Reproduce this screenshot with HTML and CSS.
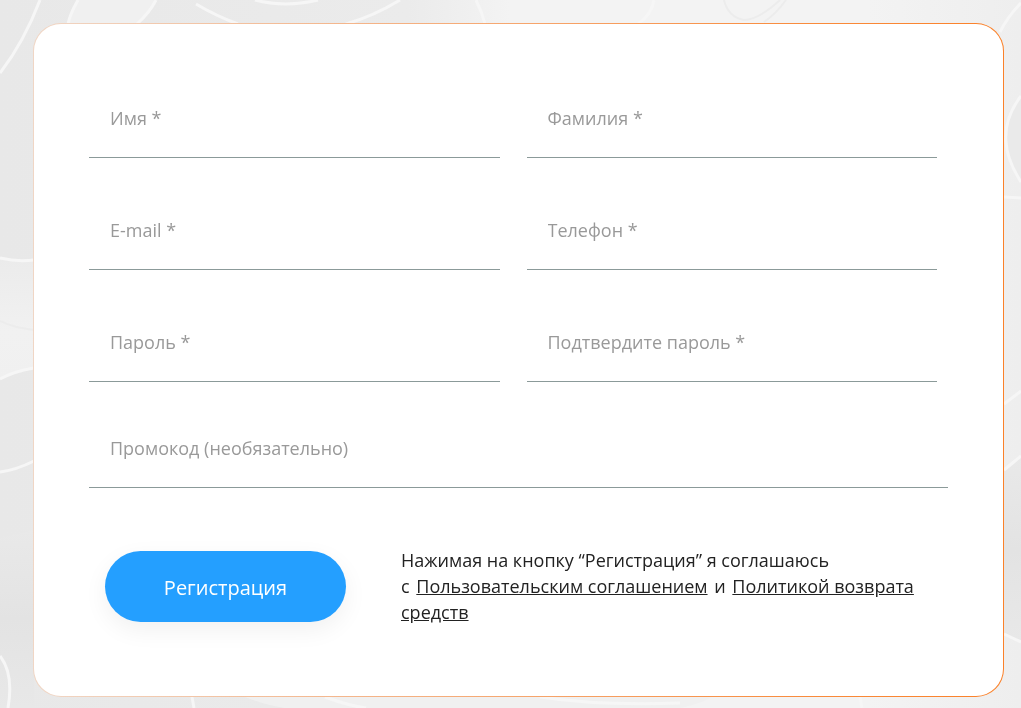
FILE: index.html
```html
<!DOCTYPE html>
<html lang="ru">
<head>
  <meta charset="UTF-8" />
  <title>Регистрация</title>
  <meta name="viewport" content="width=device-width, initial-scale=1.0" />
  <link rel="stylesheet" href="styles.css">
</head>
<body>

<svg class="page-bg" viewBox="0 0 1021 708" preserveAspectRatio="none" aria-hidden="true">
  <defs>
    <linearGradient id="base" x1="0" y1="0" x2="1" y2="0">
      <stop offset="0" stop-color="#e8e8e8" />
      <stop offset="0.4" stop-color="#ebebeb" />
      <stop offset="0.5" stop-color="#f3f3f3" />
      <stop offset="0.85" stop-color="#f3f3f3" />
      <stop offset="1" stop-color="#eeeeee" />
    </linearGradient>
    <linearGradient id="side" x1="0" y1="0" x2="0" y2="1">
      <stop offset="0" stop-color="#ebebeb" />
      <stop offset="0.6" stop-color="#f1f1f1" />
      <stop offset="1" stop-color="#f0f0f0" />
    </linearGradient>
    <linearGradient id="shade" x1="0" y1="0" x2="0" y2="1">
      <stop offset="0" stop-color="#e9e9e9" />
      <stop offset="0.5" stop-color="#e3e3e3" />
      <stop offset="1" stop-color="#e8e8e8" />
    </linearGradient>
  </defs>
  <rect width="1021" height="708" fill="url(#base)" />
  <path d="M78 0 Q70 14 68 24 H136 Q148 12 156 0Z" fill="#f0f0f0" />
  <path d="M0 258 Q17 262 34 260 V368 Q15 372 0 380Z" fill="url(#side)" />
  <path d="M0 538 L34 530 V708 H0Z" fill="url(#shade)" />
  <path d="M1004 470 L1021 456 V642 L1004 634Z" fill="url(#shade)" />
  <path d="M1021 96 Q1004 118 1006 142 Q1007 160 1021 182Z" fill="#eaeaea" />
  <path d="M245 697 Q268 706 285 708 H680 Q700 704 712 697Z" fill="#f0f0f0" />
  <g class="bg-lines">
    <path d="M40 0 Q24 42 0 73" />
    <path d="M78 0 Q70 14 68 24" />
    <path d="M156 0 Q150 12 137 24" />
    <path d="M196 4 Q216 16 238 24" />
    <path d="M255 0 Q285 8 318 0" />
    <path d="M400 0 Q374 16 346 24" />
    <path d="M476 0 Q482 12 485 24" />
    <path d="M654 0 Q652 14 638 24" />
    <path d="M1021 3 Q1008 16 1000 32" />
    <path d="M1021 96 Q1004 118 1006 142 Q1007 160 1021 182" />
    <path d="M1004 197 L1021 198" />
    <path d="M1004 404 L1021 391" />
    <path d="M1004 470 L1021 456" />
    <path d="M1004 634 L1021 642" />
    <path d="M0 258 Q17 262 34 260" />
    <path d="M34 368 Q15 371 0 379" />
    <path d="M34 461 Q16 470 0 472" />
    <path d="M0 656 Q14 674 8 708" />
    <path d="M192 697 L194 708" />
    <path d="M325 697 Q350 706 366 708" />
    <path d="M540 697 Q600 706 680 703" />
    <path d="M860 697 L862 708" />
  </g>
  <g class="bg-folds">
    <path d="M724 0 Q728 17 744 20 Q758 20 780 0" />
    <path d="M764 22 Q776 14 786 0" />
    <path d="M0 321 Q14 328 34 330" />
  </g>
</svg>

<form class="card">
  <div class="fields">
    <input class="field" type="text" name="name" placeholder="Имя *" aria-label="Имя *">
    <input class="field" type="text" name="surname" placeholder="Фамилия *" aria-label="Фамилия *">
    <input class="field" type="email" name="email" placeholder="E-mail *" aria-label="E-mail *">
    <input class="field" type="tel" name="phone" placeholder="Телефон *" aria-label="Телефон *">
    <input class="field" type="password" name="password" placeholder="Пароль *" aria-label="Пароль *">
    <input class="field" type="password" name="confirm" placeholder="Подтвердите пароль *" aria-label="Подтвердите пароль *">
  </div>
  <input class="field promo" type="text" name="promo" placeholder="Промокод (необязательно)" aria-label="Промокод (необязательно)">

  <div class="actions">
    <button class="submit" type="submit">Регистрация</button>
    <p class="agreement">
      Нажимая на кнопку “Регистрация” я соглашаюсь<br>
      с <a href="#">Пользовательским соглашением</a> и <a href="#">Политикой возврата средств</a>
    </p>
  </div>
</form>

</body>
</html>
```
FILE: styles.css
```css
* {
  box-sizing: border-box;
}

body {
  margin: 0;
  padding: 23px 17px 11px 33px;
  background: #ececec;
  color: #222;
  font-family: 'Segoe UI', 'Open Sans', sans-serif;
  font-size: 18px;
}

.page-bg {
  position: fixed;
  top: 0;
  left: 0;
  width: 100%;
  height: 100%;
  z-index: -1;
}

.bg-lines,
.bg-folds {
  fill: none;
  stroke: #f6f6f6;
  stroke-width: 3;
}

.bg-folds {
  stroke: #ececec;
  stroke-width: 2;
}

.card {
  padding: 56px 55px 71px;
  border: 1px solid transparent;
  border-radius: 28px;
  background:
    linear-gradient(#fff, #fff) padding-box,
    linear-gradient(to right, #f0d6c5, #f4b68c 32%, #f98b3c 80%, #fb8129) border-box;
}

.fields {
  display: grid;
  grid-template-columns: 1fr 1fr;
  gap: 34px 27px;
  padding-right: 11px;
}

.field {
  width: 100%;
  height: 78px;
  padding: 0 20px 2px 21px;
  border: 0;
  border-bottom: 1px solid #8b9a99;
  border-radius: 0;
  background: transparent;
  color: #222;
  font: inherit;
  outline: none;
}

.field::placeholder {
  color: #999;
  opacity: 1;
}

.promo {
  display: block;
  margin-top: 28px;
}

.actions {
  display: flex;
  align-items: center;
  gap: 55px;
  margin-top: 59px;
  padding-left: 16px;
}

.submit {
  flex: none;
  width: 241px;
  height: 71px;
  padding: 2px 0 0;
  border: 0;
  border-radius: 36px;
  background: #249fff;
  box-shadow: 0 8px 24px rgba(0, 0, 0, 0.06);
  color: #fff;
  font: inherit;
  font-size: 20px;
  cursor: pointer;
}

.agreement {
  margin: 0;
  line-height: 26px;
}

.agreement a {
  margin: 0 2px;
  color: inherit;
  text-decoration: underline;
  -webkit-box-decoration-break: slice;
  box-decoration-break: slice;
}
```
